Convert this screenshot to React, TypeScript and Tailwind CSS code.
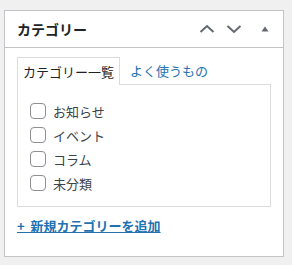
import React from "react";

const font = { fontFamily: '"Noto Sans CJK JP", "Noto Sans", sans-serif' };

function Checkbox() {
  return <span className="block w-[16px] h-[16px] shrink-0 rounded-[4px] border border-[#8c8f94] bg-white" />;
}

export default function App() {
  const items = ["お知らせ", "イベント", "コラム", "未分類"];
  return (
    <div className="w-[292px] h-[265px] bg-[#f0f0f1] pt-[10px] pl-[4px]" style={font}>
      <div className="w-[280px] h-[247px] border border-[#c3c4c7] bg-white flex flex-col">
        <div className="h-[37px] border-b border-[#c3c4c7] flex items-center pl-[12px] pr-[14px]">
          <h2 className="text-[14px] font-bold text-[#1d2327] leading-none flex-1">カテゴリー</h2>
          <div className="flex items-center">
            <svg width="16" height="10" viewBox="0 0 16 10" className="mr-[11px]">
              <polyline points="1.5,8 8,2 14.5,8" fill="none" stroke="#646970" strokeWidth="2" />
            </svg>
            <svg width="16" height="10" viewBox="0 0 16 10" className="mr-[19px]">
              <polyline points="1.5,2 8,8 14.5,2" fill="none" stroke="#646970" strokeWidth="2" />
            </svg>
            <svg width="8" height="6" viewBox="0 0 8 6">
              <polygon points="0.5,5.5 4,0.5 7.5,5.5" fill="#646970" />
            </svg>
          </div>
        </div>
        <div className="px-[12px] pt-[8px]">
          <div className="flex items-end">
            <div className="relative z-10 h-[28px] -mb-[1px] border border-b-0 border-[#dcdcde] bg-white px-[5px] w-[103px] flex items-center text-[13px] text-[#1d2327] leading-none">
              カテゴリー一覧
            </div>
            <div className="h-[28px] ml-[6px] px-[4px] flex items-center text-[13px] text-[#2271b1] leading-none">
              よく使うもの
            </div>
          </div>
          <div className="w-[254px] h-[123px] border border-[#dcdcde] bg-white pt-[14px] pl-[12px]">
            <ul>
              {items.map((t) => (
                <li key={t} className="h-[24px] flex items-center gap-[7px] text-[13px] text-[#3c434a] leading-none">
                  <Checkbox />
                  <span>{t}</span>
                </li>
              ))}
            </ul>
          </div>
          <div className="mt-[8px] leading-[18px] h-[18px]">
            <a className="text-[13px] font-semibold text-[#2271b1] underline underline-offset-[1px]">{"+\u00a0\u00a0新規カテゴリーを追加"}</a>
          </div>
        </div>
      </div>
    </div>
  );
}
